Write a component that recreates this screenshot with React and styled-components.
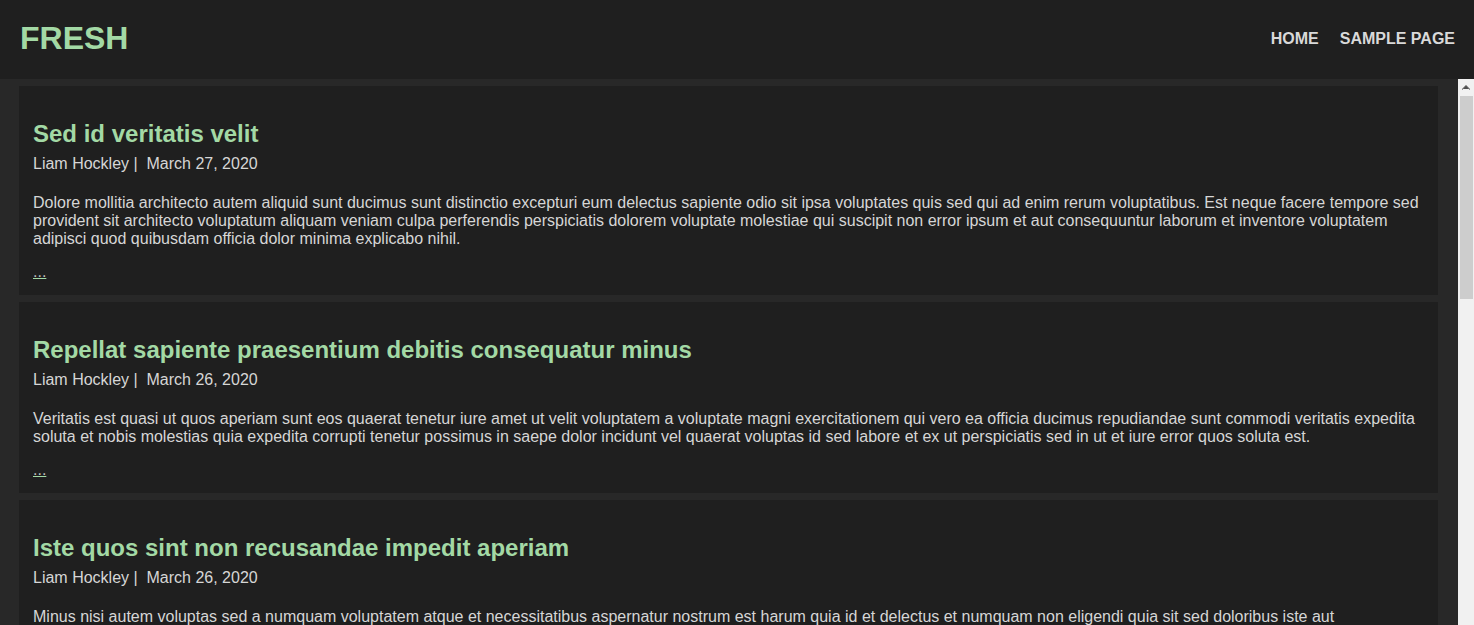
import React from 'react';
import styled, { createGlobalStyle } from 'styled-components';

const posts = [
  {
    title: 'Sed id veritatis velit',
    author: 'Liam Hockley',
    date: 'March 27, 2020',
    body: 'Dolore mollitia architecto autem aliquid sunt ducimus sunt distinctio excepturi eum delectus sapiente odio sit ipsa voluptates quis sed qui ad enim rerum voluptatibus. Est neque facere tempore sed provident sit architecto voluptatum aliquam veniam culpa perferendis perspiciatis dolorem voluptate molestiae qui suscipit non error ipsum et aut consequuntur laborum et inventore voluptatem adipisci quod quibusdam officia dolor minima explicabo nihil.',
  },
  {
    title: 'Repellat sapiente praesentium debitis consequatur minus',
    author: 'Liam Hockley',
    date: 'March 26, 2020',
    body: 'Veritatis est quasi ut quos aperiam sunt eos quaerat tenetur iure amet ut velit voluptatem a voluptate magni exercitationem qui vero ea officia ducimus repudiandae sunt commodi veritatis expedita soluta et nobis molestias quia expedita corrupti tenetur possimus in saepe dolor incidunt vel quaerat voluptas id sed labore et ex ut perspiciatis sed in ut et iure error quos soluta est.',
  },
  {
    title: 'Iste quos sint non recusandae impedit aperiam',
    author: 'Liam Hockley',
    date: 'March 26, 2020',
    body: 'Minus nisi autem voluptas sed a numquam voluptatem atque et necessitatibus aspernatur nostrum est harum quia id et delectus et numquam non eligendi quia sit sed doloribus iste aut necessitatibus quos eius quia vel ut autem quibusdam et consequatur aut ratione nulla velit.',
  },
];

function App() {
  return (
    <Page>
      <GlobalStyle />
      <Header>
        <Logo>FRESH</Logo>
        <Nav>
          <NavLink href="#">HOME</NavLink>
          <NavLink href="#">SAMPLE PAGE</NavLink>
        </Nav>
      </Header>
      <Body>
        <Feed>
          {posts.map((post) => (
            <Card key={post.title}>
              <Title>{post.title}</Title>
              <Meta>
                {post.author} |&nbsp; {post.date}
              </Meta>
              <Excerpt>{post.body}</Excerpt>
              <More href="#">...</More>
            </Card>
          ))}
        </Feed>
        {/* stand-in for the browser scrollbar */}
        <Track>
          <ArrowBtn>
            <svg width="16" height="17" viewBox="0 0 16 17">
              <path d="M4 10 L8 6 L12 10 L12 11 L8 7.5 L4 11 Z" fill="#505050" />
              <path d="M5 10 L8 7 L11 10 Z" fill="#505050" />
            </svg>
          </ArrowBtn>
          <Thumb />
        </Track>
      </Body>
    </Page>
  );
}

export default App;

const GlobalStyle = createGlobalStyle`
  html, body {
    margin: 0;
    height: 100%;
    overflow: hidden;
  }
  body {
    background: #282828;
    font-family: "Liberation Sans", Arial, sans-serif;
  }
`;

const Page = styled.div`
  display: flex;
  flex-direction: column;
  height: 100vh;
`;

const Header = styled.header`
  flex: 0 0 79px;
  display: flex;
  align-items: center;
  justify-content: space-between;
  padding: 0 19px 0 20px;
  background: #1f1f1f;
`;

const Logo = styled.div`
  font-size: 32px;
  font-weight: 700;
  color: #a3d9a5;
  margin-top: -2px;
`;

const Nav = styled.nav`
  display: flex;
  gap: 21px;
  margin-top: -2px;
`;

const NavLink = styled.a`
  font-size: 16px;
  font-weight: 700;
  color: #d9d9d9;
  text-decoration: none;
`;

const Body = styled.div`
  flex: 1;
  min-height: 0;
  display: flex;
`;

const Feed = styled.main`
  flex: 1;
  overflow: hidden;
  padding: 7px 20px 0 19px;
  display: flex;
  flex-direction: column;
  gap: 7px;
`;

const Track = styled.div`
  flex: 0 0 16px;
  display: flex;
  flex-direction: column;
  background: #f1f1f1;
`;

const ArrowBtn = styled.div`
  height: 17px;
  display: flex;
`;

const Thumb = styled.div`
  height: 203px;
  margin: 0 1px 0 2px;
  background: #cdcdcd;
`;

const Card = styled.article`
  flex-shrink: 0;
  background: #1f1f1f;
  padding: 14px;
  color: #d6d6d6;
`;

const Title = styled.h2`
  margin: 20px 0 7px;
  font-size: 24px;
  font-weight: 700;
  color: #a3d9a5;
`;

const Meta = styled.div`
  font-size: 16px;
  color: #d6d6d6;
`;

const Excerpt = styled.p`
  margin: 21px 0 15px;
  font-size: 16px;
  line-height: 18px;
  color: #d6d6d6;
`;

const More = styled.a`
  display: inline-block;
  font-size: 16px;
  color: #bdbdbd;
  text-decoration: underline;
  text-decoration-color: #a3d9a5;
`;
